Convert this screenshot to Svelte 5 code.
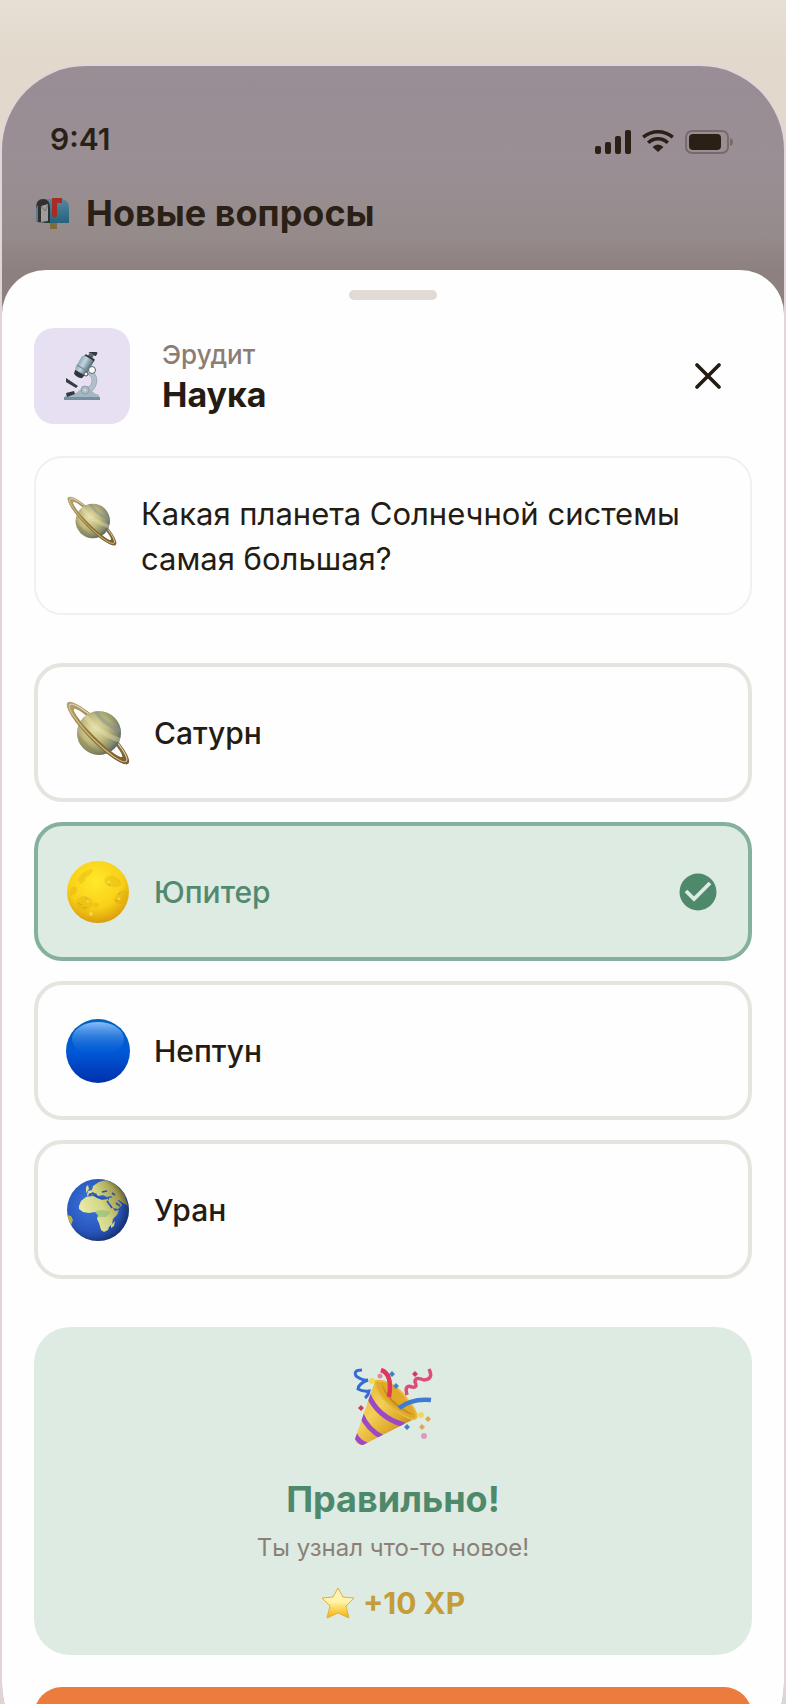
<script>
let selected = $state("Юпитер");
let open = $state(true);

const answers = [
    { name: "Сатурн", icon: "saturn" },
    { name: "Юпитер", icon: "moon" },
    { name: "Нептун", icon: "circle" },
    { name: "Уран", icon: "earth" },
];
</script>

{#snippet saturn(id)}
    <svg viewBox="0 0 64 64" aria-hidden="true">
        <defs>
            <radialGradient id="{id}-ball" cx=".4" cy=".4" r=".66">
                <stop offset="0" stop-color="#e6dfaa" />
                <stop offset=".45" stop-color="#c3bc80" />
                <stop offset=".8" stop-color="#878b6c" />
                <stop offset="1" stop-color="#4d5b62" />
            </radialGradient>
            <linearGradient id="{id}-ring" x1="0" y1="0" x2="1" y2="0">
                <stop offset="0" stop-color="#b7a476" />
                <stop offset=".5" stop-color="#8f7637" />
                <stop offset="1" stop-color="#7a5d30" />
            </linearGradient>
            <clipPath id="{id}-clip"><circle cx="33" cy="32" r="22" /></clipPath>
        </defs>
        <g transform="rotate(45 32 32)">
            <path d="M-11 32a43 9.500 0 0 1 86 0a43 9.500 0 0 1-86 0zM-2 32a34 5 0 0 0 68 0a34 5 0 0 0-68 0z" fill="url(#{id}-ring)" fill-rule="evenodd" />
            <ellipse cx="32" cy="32" rx="40" ry="8" fill="none" stroke="#e9e0c4" stroke-width="1" />
        </g>
        <circle cx="33" cy="32" r="22" fill="url(#{id}-ball)" />
        <g clip-path="url(#{id}-clip)" fill="none">
            <path d="M18 13 Q30 32 56 40" stroke="#e7e3b5" stroke-width="5" opacity=".4" />
            <path d="M28 8 Q38 25 58 31" stroke="#7f9290" stroke-width="4" opacity=".5" />
            <path d="M7 29 Q17 47 37 56" stroke="#91834a" stroke-width="5" opacity=".4" />
        </g>
        <g transform="rotate(45 32 32)">
            <path d="M-11 32a43 9.500 0 0 0 86 0h-9a34 5 0 0 1-68 0z" fill="url(#{id}-ring)" />
            <path d="M-8 32a40 7.600 0 0 0 80 0" fill="none" stroke="#d9c98f" stroke-width="1" />
        </g>
    </svg>
{/snippet}

{#snippet moon()}
    <svg viewBox="0 0 64 64" aria-hidden="true">
        <defs>
            <radialGradient id="moon-fill" cx=".46" cy=".32" r=".68">
                <stop offset="0" stop-color="#ffe92b" />
                <stop offset=".65" stop-color="#f9cf18" />
                <stop offset="1" stop-color="#d99d0c" />
            </radialGradient>
        </defs>
        <circle cx="32" cy="32" r="31" fill="url(#moon-fill)" />
        <g fill="#d2a107" opacity=".26">
            <path d="M11 40q5-6 11-3 6 2 5 8-4 6-9 5-6-1-7-4-2-3 0-6z" />
            <path d="M39 18q7-5 11-1 6 3 5 8-5 4-10 1-8 0-6-8z" />
            <path d="M48 40q3-8 8-10 5-1 6 4-2 9-8 10-5 0-6-4z" />
            <path d="M12 19q4-9 15-10-1 6-7 8-1 6-6 7z" />
            <path d="M5 28q4-3 6 1 1 5-7 7z" />
            <path d="M27 44q3-3 6 0-1 5-5 3z" />
        </g>
        <g fill="#ffe958" opacity=".6">
            <circle cx="22" cy="41" r="1.500" /><circle cx="43" cy="22" r="1.500" />
            <circle cx="53" cy="39" r="1.500" /><circle cx="25" cy="54" r="2" />
        </g>
        <path d="M19 37l4 4M49 40l4 1M42 24l3 2M12 43l4 2M17 48l4-1M52 35l3-3" stroke="#a8820f" fill="none" opacity=".4" />
    </svg>
{/snippet}

{#snippet circle()}
    <svg viewBox="0 0 64 64" aria-hidden="true">
        <defs>
            <linearGradient id="blue-fill" x1="0" y1="0" x2="0" y2="1">
                <stop offset="0" stop-color="#0064b8" />
                <stop offset=".5" stop-color="#0059d8" />
                <stop offset="1" stop-color="#0030ac" />
            </linearGradient>
            <linearGradient id="blue-shine" x1="0" y1="0" x2="0" y2="1">
                <stop offset="0" stop-color="#86bdfa" />
                <stop offset="1" stop-color="#0b60dc" stop-opacity="0" />
            </linearGradient>
        </defs>
        <circle cx="32" cy="32" r="32" fill="url(#blue-fill)" />
        <ellipse cx="32" cy="20" rx="26" ry="17" fill="url(#blue-shine)" />
    </svg>
{/snippet}

{#snippet earth()}
    <svg viewBox="0 0 64 64" aria-hidden="true">
        <defs>
            <radialGradient id="earth-sea" cx=".4" cy=".4" r=".62">
                <stop offset="0" stop-color="#3c78df" />
                <stop offset=".7" stop-color="#2857bd" />
                <stop offset="1" stop-color="#1c3c8c" />
            </radialGradient>
            <linearGradient id="earth-land" gradientUnits="userSpaceOnUse" x1="12" y1="40" x2="62" y2="18">
                <stop offset="0" stop-color="#f0f0b0" />
                <stop offset=".5" stop-color="#d3d684" />
                <stop offset="1" stop-color="#877d2d" />
            </linearGradient>
            <radialGradient id="earth-shade" cx=".42" cy=".47" r=".6">
                <stop offset=".76" stop-color="#142753" stop-opacity="0" />
                <stop offset="1" stop-color="#142753" stop-opacity=".5" />
            </radialGradient>
            <clipPath id="earth-clip"><circle cx="32" cy="32" r="31" /></clipPath>
        </defs>
        <circle cx="32" cy="32" r="31" fill="url(#earth-sea)" />
        <g clip-path="url(#earth-clip)" fill="url(#earth-land)">
            <path d="M13 28l2-5 5-4 7-1 4 2 5 2 6-1 4 8 3 4 4-1-2 5-4 4-1 5-3 3-1 3-4 2-3-2-2-7-2-4 1-4-3-3-6 1-6-1-4-3z" />
            <path d="M21 17l1-4 4-1 1-4 6-4 7-2 9 4 9 9 4 13-5-3-4-3-3 1-5-5-4 1-4-2-5 1-2-3-5 2-2-2-1 4z" />
            <path d="M43 20l6-1 7 8-4 4-5-1-4-6z" />
            <path d="M45 47l4-4-1 5-3 2z" />
            <path d="M1 37l4 1 2 4-3 8-5-7z" fill="#b8b04c" />
            <path d="M20 9l2-2 1 4-3 4z" />
        </g>
        <path d="M29 33l8-1 8 2-5 5-8 0z" fill="#6fb27b" opacity=".45" />
        <path d="M23 17l4-2 3 3 4 2 6 0M36 14l5-1M46 15l3 2M41 23l5 7M50 25l4 3" fill="none" stroke="#2850ab" stroke-width="1.600" />
        <circle cx="32" cy="32" r="31" fill="url(#earth-shade)" />
    </svg>
{/snippet}

<div class="page">
    <main class="phone">
        <div class="status">
            <span>9:41</span>
            <div class="status-icons">
                <svg width="38" height="24" viewBox="0 0 38 24" fill="#2b2015" aria-hidden="true">
                    <rect x="1" y="16" width="6" height="8" rx="2" />
                    <rect x="11" y="12" width="6" height="12" rx="2" />
                    <rect x="21" y="6" width="6" height="18" rx="2" />
                    <rect x="31" y="0" width="6" height="24" rx="2" />
                </svg>
                <svg width="32" height="24" viewBox="0 0 32 24" fill="none" stroke="#2b2015" aria-hidden="true">
                    <path d="M1.2 7.200Q8 1.800 16 1.800T30.800 7.200" stroke-width="3.600" />
                    <path d="M6.200 12.800Q10.500 8.800 16 8.800T25.800 12.800" stroke-width="3.600" />
                    <path d="M10.500 17Q13 14.500 16 14.500T21.500 17L16 22z" fill="#2b2015" stroke="none" />
                </svg>
                <svg width="50" height="24" viewBox="0 0 50 24" aria-hidden="true">
                    <rect x="2" y="1" width="42" height="22" rx="6" fill="none" stroke="#766a6b" stroke-width="2" />
                    <rect x="5" y="4" width="32" height="16" rx="4" fill="#2b2015" />
                    <path d="M46 8q3 1 3 4t-3 4z" fill="#766a6b" />
                </svg>
            </div>
        </div>

        <h1>
            <svg width="36" height="36" viewBox="0 0 36 36" aria-hidden="true">
                <defs>
                    <linearGradient id="mailbox" x1="0" y1="0" x2="0" y2="1">
                        <stop offset="0" stop-color="#5688a0" />
                        <stop offset="1" stop-color="#24627c" />
                    </linearGradient>
                </defs>
                <path d="M16 27h7v7h-7z" fill="#7d6c3c" />
                <path d="M10 4h17q8 0 8 9v15H10z" fill="url(#mailbox)" />
                <path d="M2 27V13q0-9 7-9t7 9v15z" fill="#30302f" />
                <path d="M2 13l2-3v17H2z" fill="#5c7c8a" />
                <path d="M7 11l7-2v17l-7 1z" fill="#a29b9b" />
                <path d="M7 11l4 5 3-6" fill="none" stroke="#706d6c" />
                <path d="M18 3h10v5h-5v13l-2 2-3-2z" fill="#a62d25" />
            </svg>
            Новые вопросы
        </h1>

        {#if open}
        <section class="sheet">
            <div class="handle"></div>

            <header>
                <div class="topic-icon">
                    <svg width="36" height="48" viewBox="0 0 36 48" aria-hidden="true">
                        <defs>
                            <linearGradient id="scope" x1="0" y1="0" x2="1" y2="0">
                                <stop offset="0" stop-color="#8fa9b5" />
                                <stop offset=".4" stop-color="#c3d5dc" />
                                <stop offset="1" stop-color="#516a78" />
                            </linearGradient>
                        </defs>
                        <path d="M27 18q8 6 5 15-3 8-11 9l-1-5q6-1 8-7 1-5-4-8z" fill="#b3c0c9" stroke="#8c9ca7" stroke-width=".7" />
                        <path d="M4 42l8-1 5-4h9l4 4 5 2v3H1v-2z" fill="#a3b6c1" />
                        <path d="M0 45h36v3H0z" fill="#7391a0" />
                        <g transform="rotate(30 18 16)">
                            <rect x="15" y="-5" width="9" height="4" rx="1" fill="#30383e" />
                            <rect x="17" y="-1" width="5" height="4" fill="#59656d" />
                            <rect x="14" y="2" width="11" height="5" rx="1" fill="#2f363c" />
                            <rect x="12" y="4" width="13" height="17" rx="3" fill="url(#scope)" />
                            <path d="M12 16h13" stroke="#6d8896" stroke-width="1" />
                            <path d="M13 21h11l-1 4q-5 2-9 0z" fill="#2f363c" />
                        </g>
                        <circle cx="28" cy="18" r="3.500" fill="#f8fbfc" stroke="#59646d" />
                        <circle cx="22" cy="22" r="2" fill="#f8fbfc" stroke="#46515a" />
                        <path d="M2 26l12 8-2 2-10-6zM2 41l8-2 1 3-8 3z" fill="#343b40" />
                        <circle cx="21" cy="38" r="4" fill="#a9b9c1" stroke="#8fa0aa" />
                        <circle cx="21" cy="38" r="1.500" fill="#cdd8dd" />
                    </svg>
                </div>
                <div class="topic">
                    <p>Эрудит</p>
                    <h2>Наука</h2>
                </div>
                <button class="close" aria-label="Закрыть" onclick={() => (open = false)}>
                    <svg width="26" height="26" viewBox="0 0 26 26" fill="none" stroke="#241c12" stroke-width="3.600" stroke-linecap="round" aria-hidden="true">
                        <path d="M2 2l22 22M24 2L2 24" />
                    </svg>
                </button>
            </header>

            <div class="question">
                <div class="question-icon">{@render saturn("question")}</div>
                <p>Какая планета Солнечной системы самая большая?</p>
            </div>

            <div class="answers">
                {#each answers as answer}
                    <button
                        class="answer"
                        class:correct={selected === answer.name}
                        aria-pressed={selected === answer.name}
                        onclick={() => (selected = answer.name)}
                    >
                        <span class="answer-icon">
                            {#if answer.icon === "saturn"}
                                {@render saturn("answer")}
                            {:else if answer.icon === "moon"}
                                {@render moon()}
                            {:else if answer.icon === "circle"}
                                {@render circle()}
                            {:else}
                                {@render earth()}
                            {/if}
                        </span>
                        <span class="answer-name">{answer.name}</span>
                        {#if selected === answer.name}
                            <svg class="check" viewBox="0 0 38 38" aria-hidden="true">
                                <circle cx="19" cy="19" r="18.500" fill="#4e896c" />
                                <path d="M7 18l8 8 16-16" fill="none" stroke="#deebe3" stroke-width="3.800" />
                            </svg>
                        {/if}
                    </button>
                {/each}
            </div>

            <div class="feedback">
                <svg class="popper" viewBox="0 0 80 80" aria-hidden="true">
                    <defs>
                        <linearGradient id="cone" x1="0" y1="0" x2="1" y2="1">
                            <stop offset="0" stop-color="#e0b23a" />
                            <stop offset=".4" stop-color="#f3cf58" />
                            <stop offset=".65" stop-color="#dfaa2b" />
                            <stop offset="1" stop-color="#8f570c" />
                        </linearGradient>
                        <clipPath id="cone-clip"><path d="M22 14q8 25 41 37L10 78q-7 0-8-6z" /></clipPath>
                    </defs>
                    <path d="M22 14q8 25 41 37L10 78q-7 0-8-6z" fill="url(#cone)" />
                    <g clip-path="url(#cone-clip)" fill="none" stroke="#9b48c7" stroke-width="5">
                        <path d="M15 27q9 23 36 31M8 47q7 16 21 23M1 66q4 9 13 12" />
                    </g>
                    <path d="M22 14q17-2 32 18 12 15 9 19-4 5-23-10Q22 26 22 14z" fill="#e0a928" stroke="#e8bb3d" stroke-width="2" />
                    <path d="M29 16q6 18 32 32-8-1-19-10Q30 27 29 16z" fill="#b7741a" opacity=".6" />
                    <path d="M28 3q12 4 8 27" fill="none" stroke="#df365d" stroke-width="4.500" />
                    <path d="M46 41q13-10 32-8" fill="none" stroke="#3f7bd2" stroke-width="4.500" />
                    <path d="M9 3Q0 3 3 9q7 5 12 4-10 4-10 9 5 3 11 2-1 5-4 7" fill="none" stroke="#346cd2" stroke-width="3" />
                    <path d="M76 2q5 10-5 11-9-4-9 2 3 6-3 5-8-3-5 8" fill="none" stroke="#dc4e79" stroke-width="3.500" />
                    <path d="M39 4l3 3-3 3-3-3zM43 16l3 3-3 3-3-3zM54 57l3 3-3 3-3-3z" fill="#4380c5" />
                    <path d="M62 4l3 3-3 3-3-3zM8 38l3 3-3 3-3-3z" fill="#c9405e" />
                    <path d="M75 49l3 3-3 3-3-3zM69 57l3 3-3 3-3-3z" fill="#dfa64c" />
                    <circle cx="19" cy="14" r="3" fill="#f1dc50" /><circle cx="68" cy="48" r="3" fill="#ecd95b" />
                    <circle cx="27" cy="9" r="2.500" fill="#dc8aa5" /><circle cx="71" cy="69" r="3" fill="#d99cbd" />
                </svg>
                <h2>Правильно!</h2>
                <p>Ты узнал что-то новое!</p>
                <div class="xp">
                    <svg width="34" height="32" viewBox="0 0 34 32" aria-hidden="true">
                        <defs>
                            <linearGradient id="star" x1="0" y1="0" x2="0" y2="1">
                                <stop offset="0" stop-color="#fff0b6" />
                                <stop offset=".45" stop-color="#fff5a8" />
                                <stop offset="1" stop-color="#f5b000" />
                            </linearGradient>
                        </defs>
                        <path d="M17 1l5 9 11 1-8 8 3 12-11-5-11 5 3-12-8-8 11-1z" fill="url(#star)" stroke="#e0ae48" stroke-width="1" stroke-linejoin="round" />
                    </svg>
                    <span>+10 XP</span>
                </div>
            </div>

            <button class="next" aria-label="Далее"></button>
        </section>
        {/if}
    </main>
</div>

<style>
:global(body) {
    background: #e2d8cb;
}

.page {
    box-sizing: border-box;
    height: 100vh;
    overflow: hidden;
    padding: 66px 2px 0;
    background: linear-gradient(#e6dfd5, #e2d8cb 66px, #e0d5cb);
    color: #241c12;
    font-family: Inter, "Liberation Sans", sans-serif;
}

h1, h2, p {
    margin: 0;
}

button {
    border: 0;
    padding: 0;
    background: none;
    color: inherit;
    font-family: inherit;
    cursor: pointer;
}

svg {
    display: block;
    flex: none;
}

.phone {
    padding-top: 50px;
    overflow: hidden;
    border-radius: 84px;
    background: linear-gradient(#998d96, #998f93 110px, #958b8b 170px, #8d8180 204px, #8d8180);
    box-shadow: 0 0 0 2px #e0d5d9;
}

.status {
    display: flex;
    align-items: center;
    justify-content: space-between;
    height: 46px;
    padding: 0 50px 0 48px;
    color: #2b2015;
    font-size: 30px;
    font-weight: 600;
}

.status-icons {
    display: flex;
    gap: 10px;
    padding-top: 6px;
}

h1 {
    display: flex;
    align-items: center;
    gap: 16px;
    margin: 29px 32px 35px;
    color: #2b2015;
    font-size: 36px;
    font-weight: 700;
    line-height: 44px;
}

.sheet {
    padding: 20px 32px 16px;
    border-radius: 44px 44px 0 0;
    background: #fefefe;
}

.handle {
    width: 88px;
    height: 10px;
    margin: 0 auto 28px;
    border-radius: 5px;
    background: #e2dad4;
}

header {
    display: flex;
    align-items: center;
    margin-bottom: 32px;
}

.topic-icon {
    display: flex;
    align-items: center;
    justify-content: center;
    width: 96px;
    height: 96px;
    margin-right: 32px;
    border-radius: 20px;
    background: #e6e0f2;
}

.topic {
    flex: 1;
}

.topic p {
    margin-bottom: 2px;
    color: #8b7d74;
    font-size: 26px;
    font-weight: 500;
    line-height: 36px;
}

.topic h2 {
    font-size: 34px;
    font-weight: 700;
    line-height: 40px;
}

.close {
    display: flex;
    align-items: center;
    justify-content: center;
    width: 88px;
    height: 88px;
}

.question {
    display: flex;
    gap: 24px;
    padding: 33px 30px 32px 31px;
    border: 2px solid #f0f0ee;
    border-radius: 28px;
    font-size: 31px;
    line-height: 45px;
}

.question-icon {
    flex: none;
    width: 50px;
    height: 50px;
    padding-top: 5px;
}

.answers {
    display: flex;
    flex-direction: column;
    gap: 20px;
    margin: 48px 0;
}

.answer {
    box-sizing: border-box;
    display: flex;
    align-items: center;
    gap: 24px;
    height: 139px;
    padding: 0 31px 0 28px;
    border: 4px solid #e5e4df;
    border-radius: 28px;
    font-size: 30px;
    font-weight: 500;
    text-align: left;
}

.answer-icon {
    width: 64px;
    height: 64px;
}

.answer-name {
    flex: 1;
}

.answer.correct {
    border-color: #84b19c;
    background: #deebe3;
    color: #52896f;
}

.check {
    width: 38px;
    height: 38px;
}

.feedback {
    display: flex;
    flex-direction: column;
    align-items: center;
    padding: 40px 24px 34px;
    border-radius: 36px;
    background: #deebe3;
    text-align: center;
}

.popper {
    width: 80px;
    height: 80px;
    margin-bottom: 30px;
}

.feedback h2 {
    margin-bottom: 11px;
    color: #4e896c;
    font-size: 36px;
    font-weight: 700;
    line-height: 44px;
}

.feedback p {
    margin-bottom: 21px;
    color: #8b8078;
    font-size: 24px;
    line-height: 32px;
}

.xp {
    display: flex;
    align-items: center;
    gap: 8px;
    color: #c49c38;
    font-size: 30px;
    font-weight: 700;
    line-height: 36px;
}

.next {
    display: block;
    width: 100%;
    height: 64px;
    margin-top: 32px;
    border-radius: 28px;
    background: #ec7c3e;
}
</style>
